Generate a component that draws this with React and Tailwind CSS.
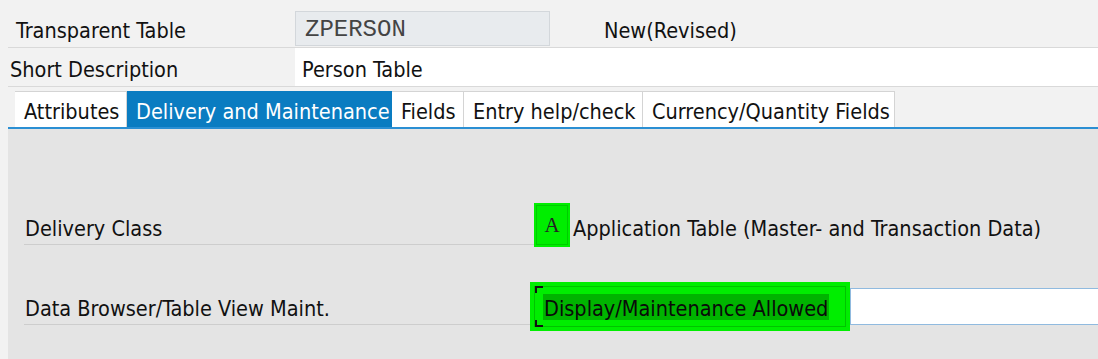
import { useState } from 'react'

const tabs = [
  { label: 'Attributes', width: 'w-[112px]' },
  { label: 'Delivery and Maintenance', width: 'w-[265px]' },
  { label: 'Fields', width: 'w-[72px]' },
  { label: 'Entry help/check', width: 'w-[179px]' },
  { label: 'Currency/Quantity Fields', width: 'w-[252px]' },
]

function App() {
  const [active, setActive] = useState(1)

  return (
    <div className="w-[1098px] h-[359px] overflow-hidden bg-[#f2f2f2] text-[21.5px] text-[#111] font-['DejaVu_Sans_Condensed','DejaVu_Sans',sans-serif] flex flex-col">
      {/* header: table name */}
      <div className="ml-[8px] h-[48px] flex items-start border-b border-[#d9d9d9]">
        <div className="w-[287px] h-full flex items-center pl-[8px] pt-[16px]">Transparent Table</div>
        <div className="mt-[11px] w-[255px] h-[35px] bg-[#e8ebee] border border-[#d3d7db] flex items-center pl-[9px] pt-[2px] text-[24px] text-[#444] font-['Liberation_Mono',monospace]">
          ZPERSON
        </div>
        <div className="ml-[54px] h-full flex items-center pt-[16px]">New(Revised)</div>
      </div>

      {/* short description */}
      <div className="ml-[8px] h-[39px] flex border-b border-[#d9d9d9]">
        <div className="w-[287px] flex items-center pl-[2px] pt-[6px]">Short Description</div>
        <div className="flex-1 bg-white flex items-center pl-[7px] pt-[6px]">Person Table</div>
      </div>

      {/* tabs */}
      <div className="mt-[4px] ml-[8px] flex border-b-2 border-[#2b8fd3]">
        <div className="w-[7px]" />
        {tabs.map((t, i) => (
          <button
            key={t.label}
            onClick={() => setActive(i)}
            className={`${t.width} h-[36px] flex items-center pl-[9px] pt-[6px] whitespace-nowrap ${
              i === active
                ? 'bg-[#0a7cc1] text-white'
                : 'bg-white border-t border-r border-[#d4d4d4] first:border-l'
            }`}
          >
            {t.label}
          </button>
        ))}
      </div>

      {/* tab content */}
      <div className="ml-[8px] flex-1 bg-[#e4e4e4] pl-[16px] pt-[74px]">
        <div className="flex items-start">
          <div className="w-[510px] h-[42px] flex items-center pl-[1px] pt-[12px] border-b border-[#cdcdcd]">Delivery Class</div>
          <div className="w-[36px] h-[44px] bg-[#00ee00] p-[2px]">
            <div className="w-full h-full border border-[#00cc00] flex items-center justify-center pt-[2px] text-[21px] text-[#222] font-['Liberation_Serif',serif]">
              A
            </div>
          </div>
          <div className="ml-[3px] h-[44px] flex items-center pt-[8px] whitespace-nowrap">Application Table (Master- and Transaction Data)</div>
        </div>

        <div className="mt-[35px] flex items-start">
          <div className="w-[506px] h-[43px] flex items-center pl-[1px] pt-[13px] border-b border-[#cdcdcd]">Data Browser/Table View Maint.</div>
          <div className="relative w-[320px] h-[49px] bg-[#00ee00] p-[4px]">
            <span className="absolute left-[5px] top-[4px] w-[8px] h-[7px] border-l-2 border-t-2 border-[#111]" />
            <span className="absolute left-[5px] bottom-[4px] w-[8px] h-[7px] border-l-2 border-b-2 border-[#111]" />
            <div className="w-full h-full border border-[#00c400] flex items-center pl-[8px]">
              <span className="bg-[#00b400] h-[26px] flex items-center px-[1px] pt-[5px] text-[#0a0a0a] whitespace-nowrap">Display/Maintenance Allowed</span>
            </div>
          </div>
          <div className="flex-1 mt-[6px] h-[37px] bg-white border border-r-0 border-[#90badf]" />
        </div>
      </div>
    </div>
  )
}

export default App
